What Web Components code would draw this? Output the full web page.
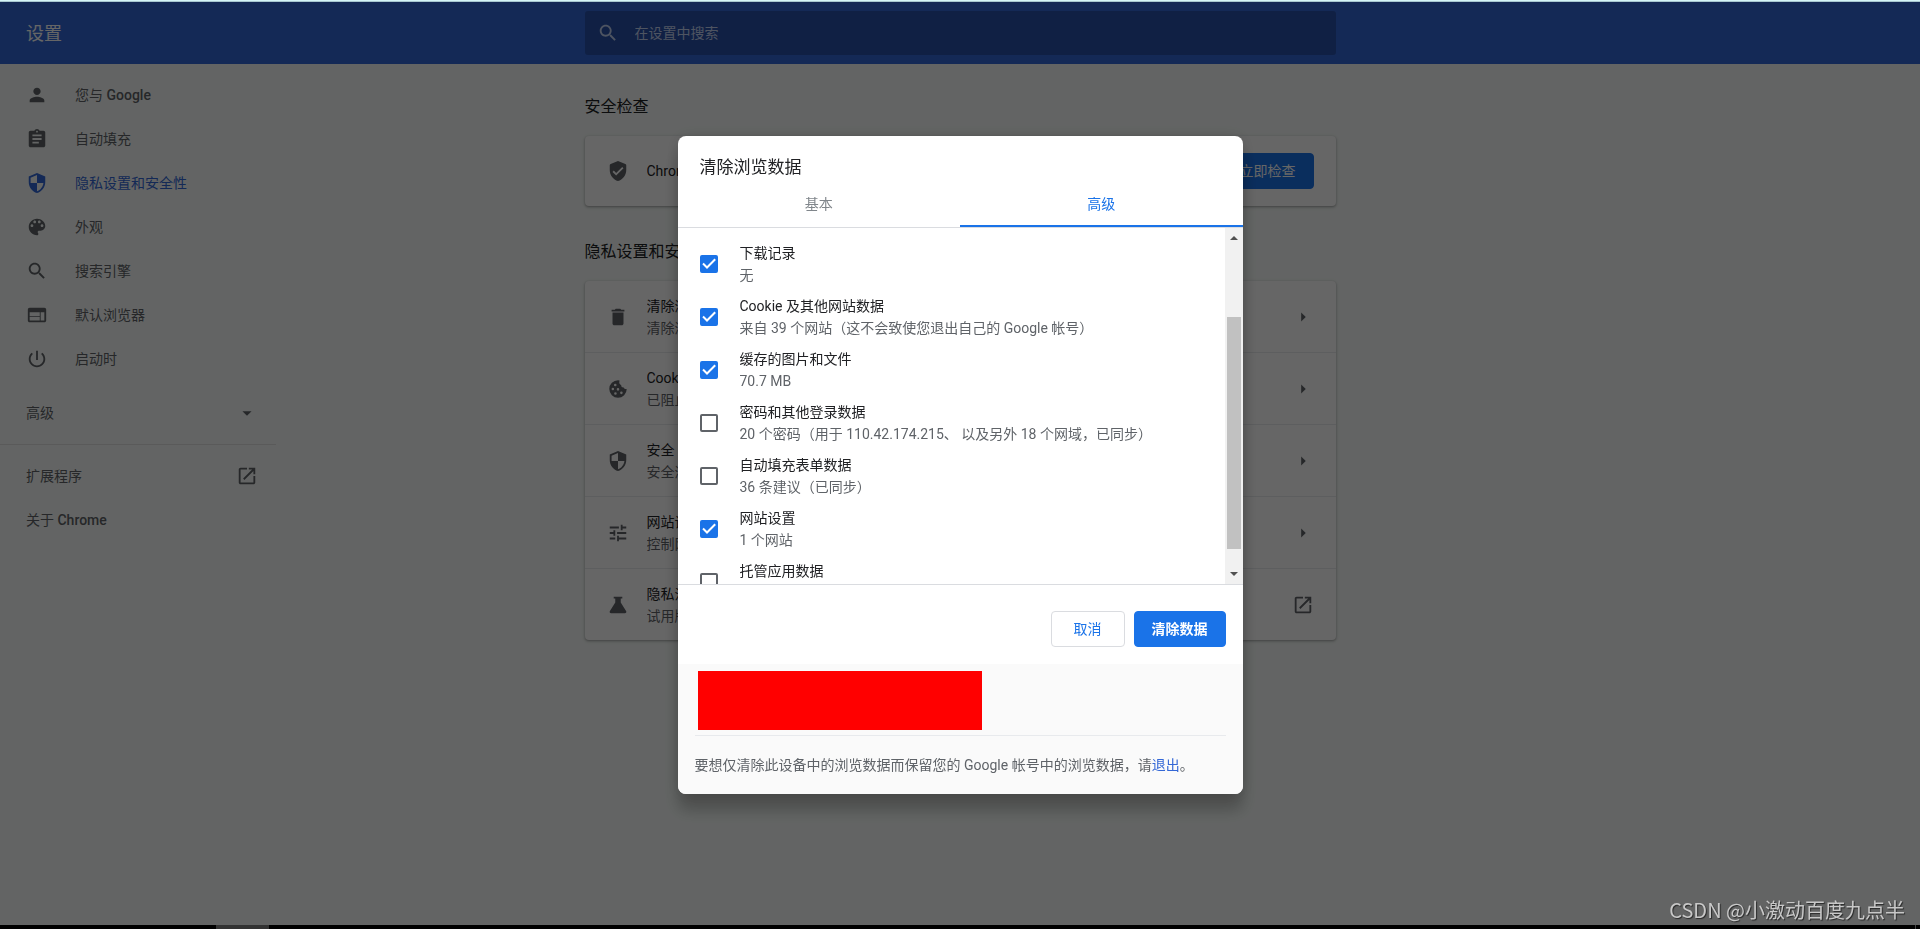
<!DOCTYPE html>
<html lang="zh-CN">
<head>
<meta charset="utf-8">
<title>设置</title>
<style>
  html, body { margin: 0; height: 100%; }
  body {
    font-family: Roboto, "Noto Sans CJK SC", sans-serif;
    font-size: 14px;
    line-height: 22px;
    color: #202124;
    background: #f7fbf9;
  }
</style>
</head>
<body>
<settings-app></settings-app>
<script>
const ICONS = {
  person: 'M12 12c2.21 0 4-1.79 4-4s-1.79-4-4-4-4 1.79-4 4 1.79 4 4 4zm0 2c-2.67 0-8 1.34-8 4v2h16v-2c0-2.66-5.33-4-8-4z',
  assignment: 'M19 3h-4.18C14.4 1.84 13.3 1 12 1c-1.3 0-2.4.84-2.82 2H5c-1.1 0-2 .9-2 2v14c0 1.1.9 2 2 2h14c1.1 0 2-.9 2-2V5c0-1.1-.9-2-2-2zm-7 0c.55 0 1 .45 1 1s-.45 1-1 1-1-.45-1-1 .45-1 1-1zm2 14H7v-2h7v2zm3-4H7v-2h10v2zm0-4H7V7h10v2z',
  security: 'M12 1L3 5v6c0 5.55 3.84 10.74 9 12 5.16-1.26 9-6.45 9-12V5l-9-4zm0 10.99h7c-.53 4.12-3.28 7.79-7 8.94V12H5V6.3l7-3.11v8.8z',
  palette: 'M12 3c-4.97 0-9 4.03-9 9s4.03 9 9 9c.83 0 1.5-.67 1.5-1.5 0-.39-.15-.74-.39-1.01-.23-.26-.38-.61-.38-.99 0-.83.67-1.5 1.5-1.5H16c2.76 0 5-2.24 5-5 0-4.42-4.03-8-9-8zm-5.5 9c-.83 0-1.5-.67-1.5-1.5S5.67 9 6.5 9 8 9.67 8 10.5 7.33 12 6.5 12zm3-4C8.67 8 8 7.33 8 6.5S8.67 5 9.5 5s1.5.67 1.5 1.5S10.33 8 9.5 8zm5 0c-.83 0-1.5-.67-1.5-1.5S13.67 5 14.5 5s1.5.67 1.5 1.5S15.33 8 14.5 8zm3 4c-.83 0-1.5-.67-1.5-1.5S16.67 9 17.5 9s1.5.67 1.5 1.5-.67 1.5-1.5 1.5z',
  search: 'M15.5 14h-.79l-.28-.27C15.41 12.59 16 11.11 16 9.5 16 5.91 13.09 3 9.5 3S3 5.91 3 9.5 5.91 16 9.5 16c1.61 0 3.09-.59 4.23-1.57l.27.28v.79l5 4.99L20.49 19l-4.99-5zm-6 0C7.01 14 5 11.99 5 9.5S7.01 5 9.5 5 14 7.01 14 9.5 11.99 14 9.5 14z',
  web: 'M20 4H4c-1.1 0-1.99.9-1.99 2L2 18c0 1.1.9 2 2 2h16c1.1 0 2-.9 2-2V6c0-1.1-.9-2-2-2zm-5 14H4v-4h11v4zm0-5H4V9h11v4zm5 5h-4V9h4v9z',
  power: 'M13 3h-2v10h2V3zm4.83 2.17l-1.42 1.42C17.99 7.86 19 9.81 19 12c0 3.87-3.13 7-7 7s-7-3.13-7-7c0-2.19 1.01-4.14 2.58-5.42L6.17 5.17C4.23 6.82 3 9.26 3 12c0 4.97 4.03 9 9 9s9-4.03 9-9c0-2.74-1.23-5.18-3.17-6.83z',
  launch: 'M19 19H5V5h7V3H5c-1.11 0-2 .9-2 2v14c0 1.1.89 2 2 2h14c1.1 0 2-.9 2-2v-7h-2v7zM14 3v2h3.59l-9.83 9.83 1.41 1.41L19 6.41V10h2V3h-7z',
  verified: 'M12 1L4 4.3Q3 4.7 3 5.8V11c0 5.55 3.84 10.74 9 12 5.16-1.26 9-6.45 9-12V5.8Q21 4.7 20 4.3zm-2 16l-4-4 1.41-1.41L10 14.17l6.59-6.59L18 9l-8 8z',
  trash: 'M6 19c0 1.1.9 2 2 2h8c1.1 0 2-.9 2-2V7H6v12zM19 4h-3.5l-1-1h-5l-1 1H5v2h14V4z',
  cookie: 'M12 2.5a9.5 9.5 0 1 0 9.5 9.5c-1.5.3-2.8-.3-3.2-1.7-1.9.2-3.1-1-2.8-2.7-1.8-.4-2.7-2.3-1.8-4.9A9.5 9.5 0 0 0 12 2.5zM9 6.2a1.4 1.4 0 1 1 0 2.8 1.4 1.4 0 0 1 0-2.8zM6.4 10.6a1.4 1.4 0 1 1 0 2.8 1.4 1.4 0 0 1 0-2.8zM12 11a1.4 1.4 0 1 1 0 2.8 1.4 1.4 0 0 1 0-2.8zM9.2 15.5a1.4 1.4 0 1 1 0 2.8 1.4 1.4 0 0 1 0-2.8zM15.7 14.8a1.4 1.4 0 1 1 0 2.8 1.4 1.4 0 0 1 0-2.8z',
  tune: 'M3 17v2h6v-2H3zM3 5v2h10V5H3zm10 16v-2h8v-2h-8v-2h-2v6h2zM7 9v2H3v2h4v2h2V9H7zm14 4v-2H11v2h10zm-6-4h2V7h4V5h-4V3h-2v6z',
  flask: 'M7.3 3h9.4v2H15v4.3l5.8 9.2c.8 1.3.1 2.5-1.4 2.5H4.6c-1.5 0-2.2-1.2-1.4-2.5L9 9.3V5H7.3z',
  down: 'M7 10l5 5 5-5z',
  right: 'M10 7l5 5-5 5z'
};

class BaseElement extends HTMLElement {
  render(html) {
    const t = document.createElement('template');
    t.innerHTML = html;
    this.attachShadow({ mode: 'open' }).append(t.content.cloneNode(true));
  }
}

customElements.define('ui-icon', class extends BaseElement {
  connectedCallback() {
    if (this.shadowRoot) return;
    this.render(`<style>
      :host { display: block; flex: none; width: 22px; height: 22px; }
      svg { display: block; width: 100%; height: 100%; fill: currentColor; }
    </style>
    <svg viewBox="0 0 24 24" aria-hidden="true"><path fill-rule="evenodd" d="${ICONS[this.getAttribute('name')]}"/></svg>`);
  }
});

customElements.define('settings-toolbar', class extends BaseElement {
  constructor() {
    super();
    this.render(`<style>
      :host {
        display: grid; grid-template-columns: 1fr minmax(0, 751px) 1fr; align-items: center;
        height: 62px; background: #3367d6; color: #fff;
      }
      h1 { margin: 0; padding: 2px 0 0 26px; font-size: 18px; font-weight: 400; line-height: 24px; }
      label {
        display: flex; align-items: center; height: 44px; box-sizing: border-box;
        padding: 0 12px; gap: 16px; border-radius: 3px; background: #2952ab; color: #c2d1f2;
      }
      input {
        flex: 1; min-width: 0; border: 0; padding: 0; outline: 0; background: none;
        font: inherit; color: inherit;
      }
      input::placeholder { color: inherit; opacity: 1; }
    </style>
    <h1>设置</h1>
    <label><ui-icon name="search"></ui-icon><input type="text" placeholder="在设置中搜索" aria-label="在设置中搜索"></label>`);
  }
});

customElements.define('menu-link', class extends BaseElement {
  connectedCallback() {
    if (this.shadowRoot) return;
    const icon = this.getAttribute('icon');
    const end = this.getAttribute('end');
    this.render(`<style>
      :host { display: block; color: #5f6368; }
      :host([selected]) { color: #3367d6; }
      a {
        display: flex; align-items: center; gap: 27px; height: 44px;
        padding: 0 18px 0 26px; color: inherit; text-decoration: none;
      }
      span { flex: 1; }
      ::slotted(b) { font-weight: 500; }
    </style>
    <a href="#">${icon ? `<ui-icon name="${icon}"></ui-icon>` : ''}<span><slot></slot></span>${end ? `<ui-icon name="${end}"></ui-icon>` : ''}</a>`);
  }
});

customElements.define('settings-menu', class extends BaseElement {
  constructor() {
    super();
    this.render(`<style>
      :host { display: block; width: 276px; padding-top: 9px; }
      button {
        display: flex; align-items: center; justify-content: space-between;
        width: 100%; height: 44px; margin: 10px 0 9px; padding: 0 18px 0 26px;
        border: 0; background: none; font: inherit; color: #5f6368;
      }
      hr { margin: 0 0 9px; border: 0; border-top: 1px solid #e0e2e1; }
    </style>
    <nav>
      <menu-link icon="person">您与 <b>Google</b></menu-link>
      <menu-link icon="assignment">自动填充</menu-link>
      <menu-link icon="security" selected>隐私设置和安全性</menu-link>
      <menu-link icon="palette">外观</menu-link>
      <menu-link icon="search">搜索引擎</menu-link>
      <menu-link icon="web">默认浏览器</menu-link>
      <menu-link icon="power">启动时</menu-link>
      <button type="button">高级<ui-icon name="down"></ui-icon></button>
      <hr>
      <menu-link end="launch">扩展程序</menu-link>
      <menu-link>关于 <b>Chrome</b></menu-link>
    </nav>`);
  }
});

customElements.define('settings-card', class extends BaseElement {
  constructor() {
    super();
    this.render(`<style>
      :host { display: block; margin-bottom: 3px; }
      h2 { margin: 0; padding: 32px 0 18px; font-size: 16px; font-weight: 400; line-height: 22px; }
      div {
        border-radius: 4px; background: #fff; overflow: hidden;
        box-shadow: 0 1px 2px rgba(60,64,67,.3), 0 1px 3px 1px rgba(60,64,67,.15);
      }
    </style>
    <h2><slot name="title"></slot></h2>
    <div><slot></slot></div>`);
  }
});

customElements.define('card-row', class extends BaseElement {
  connectedCallback() {
    if (this.shadowRoot) return;
    const end = this.getAttribute('end');
    this.render(`<style>
      :host { display: block; }
      :host([divided]) { border-top: 1px solid #e8eaed; }
      .row {
        display: flex; align-items: center; gap: 18px; height: 70px;
        padding: 0 22px; color: inherit; text-decoration: none;
      }
      a.row { height: 71px; }
      ui-icon { color: #5f6368; }
      .text { flex: 1; min-width: 0; white-space: nowrap; overflow: hidden; }
      .sub { color: #5f6368; }
    </style>
    <${end ? 'a href="#"' : 'div'} class="row">
      <ui-icon name="${this.getAttribute('icon')}"></ui-icon>
      <div class="text"><slot></slot><div class="sub"><slot name="sub"></slot></div></div>
      ${end ? `<ui-icon name="${end}"></ui-icon>` : '<slot name="action"></slot>'}
    </${end ? 'a' : 'div'}>`);
  }
});

customElements.define('ui-button', class extends BaseElement {
  constructor() {
    super();
    this.render(`<style>
      :host { display: block; }
      button {
        display: block; height: 36px; box-sizing: border-box; padding: 0 17px;
        border: 1px solid #dadce0; border-radius: 4px; background: #fff;
        font: inherit; color: #1a73e8; white-space: nowrap;
      }
      :host([small]) button { padding: 0 22px; }
      :host([primary]) button { border-color: #1a73e8; background: #1a73e8; color: #fff; }
      :host([strong]) button { font-weight: 700; }
    </style>
    <button type="button"><slot></slot></button>`);
  }
});

customElements.define('settings-main', class extends BaseElement {
  constructor() {
    super();
    this.render(`<style>
      :host { display: block; }
    </style>
    <main>
      <settings-card>
        <span slot="title">安全检查</span>
        <card-row icon="verified">Chrome 安全检查
          <ui-button primary slot="action">立即检查</ui-button></card-row>
      </settings-card>
      <settings-card>
        <span slot="title">隐私设置和安全性</span>
        <card-row icon="trash" end="right">清除浏览数据<span slot="sub">清除浏览记录、Cookie、缓存及其他数据</span></card-row>
        <card-row divided icon="cookie" end="right">Cookie 及其他网站数据<span slot="sub">已阻止无痕模式下的第三方 Cookie</span></card-row>
        <card-row divided icon="security" end="right">安全<span slot="sub">安全浏览和其他安全设置</span></card-row>
        <card-row divided icon="tune" end="right">网站设置<span slot="sub">控制网站可以使用和显示什么信息</span></card-row>
        <card-row divided icon="flask" end="launch">隐私沙盒<span slot="sub">试用版功能已开启</span></card-row>
      </settings-card>
    </main>`);
  }
});

customElements.define('check-row', class extends BaseElement {
  connectedCallback() {
    if (this.shadowRoot) return;
    this.render(`<style>
      :host { display: block; }
      label { display: flex; align-items: center; gap: 22px; height: 53px; padding-left: 22px; }
      .box { display: grid; flex: none; width: 18px; height: 18px; }
      input, svg { grid-area: 1 / 1; width: 18px; height: 18px; margin: 0; }
      input { appearance: none; border: 2px solid #5f6368; border-radius: 2px; box-sizing: border-box; }
      input:checked { border-color: #1a73e8; background: #1a73e8; }
      svg { fill: none; stroke: #fff; stroke-width: 2; pointer-events: none; visibility: hidden; }
      input:checked + svg { visibility: visible; }
      .text { white-space: nowrap; }
      .sub { display: block; color: #5f6368; }
    </style>
    <label>
      <span class="box"><input type="checkbox" ${this.hasAttribute('checked') ? 'checked' : ''}>
      <svg viewBox="0 0 18 18" aria-hidden="true"><path d="M3 8.5L7 12.5L15.2 4.2"/></svg></span>
      <span class="text"><slot></slot><span class="sub"><slot name="sub"></slot></span></span>
    </label>`);
  }
});

customElements.define('scroll-rail', class extends BaseElement {
  constructor() {
    super();
    this.render(`<style>
      :host { display: flex; flex-direction: column; align-items: center; width: 18px; background: #f1f1f1; }
      svg { flex: none; width: 18px; height: 18px; fill: #505050; }
      .before { flex: 71; }
      .thumb { flex: 232; width: 14px; background: #c1c1c1; }
      .after { flex: 17; }
    </style>
    <svg viewBox="0 0 18 18"><path d="M5 12l4-4 4 4z"/></svg>
    <div class="before"></div><div class="thumb"></div><div class="after"></div>
    <svg viewBox="0 0 18 18"><path d="M5 6l4 4 4-4z"/></svg>`);
  }
});

customElements.define('clear-data-dialog', class extends BaseElement {
  constructor() {
    super();
    this.render(`<style>
      :host {
        display: block; width: 565px; max-width: 100%; overflow: hidden;
        border-radius: 8px; background: #fff;
        box-shadow: 0 0 16px rgba(0,0,0,.12), 0 16px 16px rgba(0,0,0,.24);
      }
      h2 { margin: 0; padding: 20px 22px 4px; font-size: 17px; font-weight: 400; line-height: 22px; }
      .tabs { display: flex; height: 45px; border-bottom: 1px solid #dadce0; }
      .tabs button {
        flex: 1; padding: 2px 0 0; border: 0; border-bottom: 2px solid transparent; background: none;
        font: inherit; color: #80868b;
      }
      .tabs button[aria-selected=true] { color: #1a73e8; border-color: #1a73e8; }
      .body { display: flex; height: 356px; border-bottom: 1px solid #dadce0; }
      .list {
        flex: 1; min-width: 0; border-top: 1px solid #fff; overflow-y: auto; scrollbar-width: none;
      }
      .actions { display: flex; justify-content: flex-end; gap: 9px; padding: 26px 17px 17px; }
      footer { padding: 7px 17px 18px; background: #fafafa; color: #5f6368; }
      .account { width: 284px; height: 59px; margin: 0 3px 5px; background: #f00; }
      hr { margin: 0 0 18px; border: 0; border-top: 1px solid #e8eaed; }
      p { margin: 0; }
      a { color: #3367d6; text-decoration: none; }
    </style>
    <section role="dialog" aria-labelledby="heading">
      <h2 id="heading">清除浏览数据</h2>
      <div class="tabs" role="tablist">
        <button type="button" role="tab" aria-selected="false">基本</button>
        <button type="button" role="tab" aria-selected="true">高级</button>
      </div>
      <div class="body">
        <div class="list">
          <check-row checked>浏览记录<span slot="sub">42 项内容（以及已同步设备上的更多内容）</span></check-row>
          <check-row checked>下载记录<span slot="sub">无</span></check-row>
          <check-row checked>Cookie 及其他网站数据<span slot="sub">来自 39 个网站（这不会致使您退出自己的 Google 帐号）</span></check-row>
          <check-row checked>缓存的图片和文件<span slot="sub">70.7 MB</span></check-row>
          <check-row>密码和其他登录数据<span slot="sub">20 个密码（用于 110.42.174.215、 以及另外 18 个网域，已同步）</span></check-row>
          <check-row>自动填充表单数据<span slot="sub">36 条建议（已同步）</span></check-row>
          <check-row checked>网站设置<span slot="sub">1 个网站</span></check-row>
          <check-row>托管应用数据<span slot="sub">1 个应用</span></check-row>
        </div>
        <scroll-rail></scroll-rail>
      </div>
      <div class="actions">
        <ui-button small>取消</ui-button>
        <ui-button primary strong>清除数据</ui-button>
      </div>
      <footer>
        <div class="account"></div>
        <hr>
        <p>要想仅清除此设备中的浏览数据而保留您的 Google 帐号中的浏览数据，请<a href="#">退出</a>。</p>
      </footer>
    </section>`);
  }
  connectedCallback() {
    this.shadowRoot.querySelector('.list').scrollTop = 44;
  }
});

customElements.define('task-bar', class extends BaseElement {
  constructor() {
    super();
    this.render(`<style>
      :host { display: flex; justify-content: space-between; height: 4px; background: #000; }
      .window { width: 53px; margin-left: 216px; background: #333; }
      .desktop { width: 1px; margin-right: 4px; background: #444; }
    </style>
    <div class="window"></div><div class="desktop"></div>`);
  }
});

customElements.define('settings-app', class extends BaseElement {
  constructor() {
    super();
    this.render(`<style>
      :host { display: flex; flex-direction: column; min-height: 100vh; }
      .edge { height: 2px; background: linear-gradient(#d5f5f8 50%, #a9c8d0 50%); }
      .edge, task-bar { position: relative; z-index: 2; }
      .content {
        flex: 1; display: grid; grid-template-columns: 1fr minmax(0, 751px) 1fr; align-items: start;
      }
      .scrim {
        position: fixed; inset: 0; z-index: 1; display: flex; align-items: center; justify-content: center;
        background: rgba(0,0,0,.6);
      }
      .mark {
        position: fixed; right: 15px; bottom: 7px; z-index: 3;
        font-family: "Noto Sans CJK SC", sans-serif; font-size: 20px; line-height: 24px;
        color: #c8c8c8; text-shadow: 1px 1px 1px rgba(0,0,0,.6);
      }
    </style>
    <div class="edge"></div>
    <settings-toolbar></settings-toolbar>
    <div class="content"><settings-menu></settings-menu><settings-main></settings-main></div>
    <task-bar></task-bar>
    <div class="scrim"><clear-data-dialog></clear-data-dialog></div>
    <div class="mark">CSDN @小激动百度九点半</div>`);
  }
});
</script>
</body>
</html>
